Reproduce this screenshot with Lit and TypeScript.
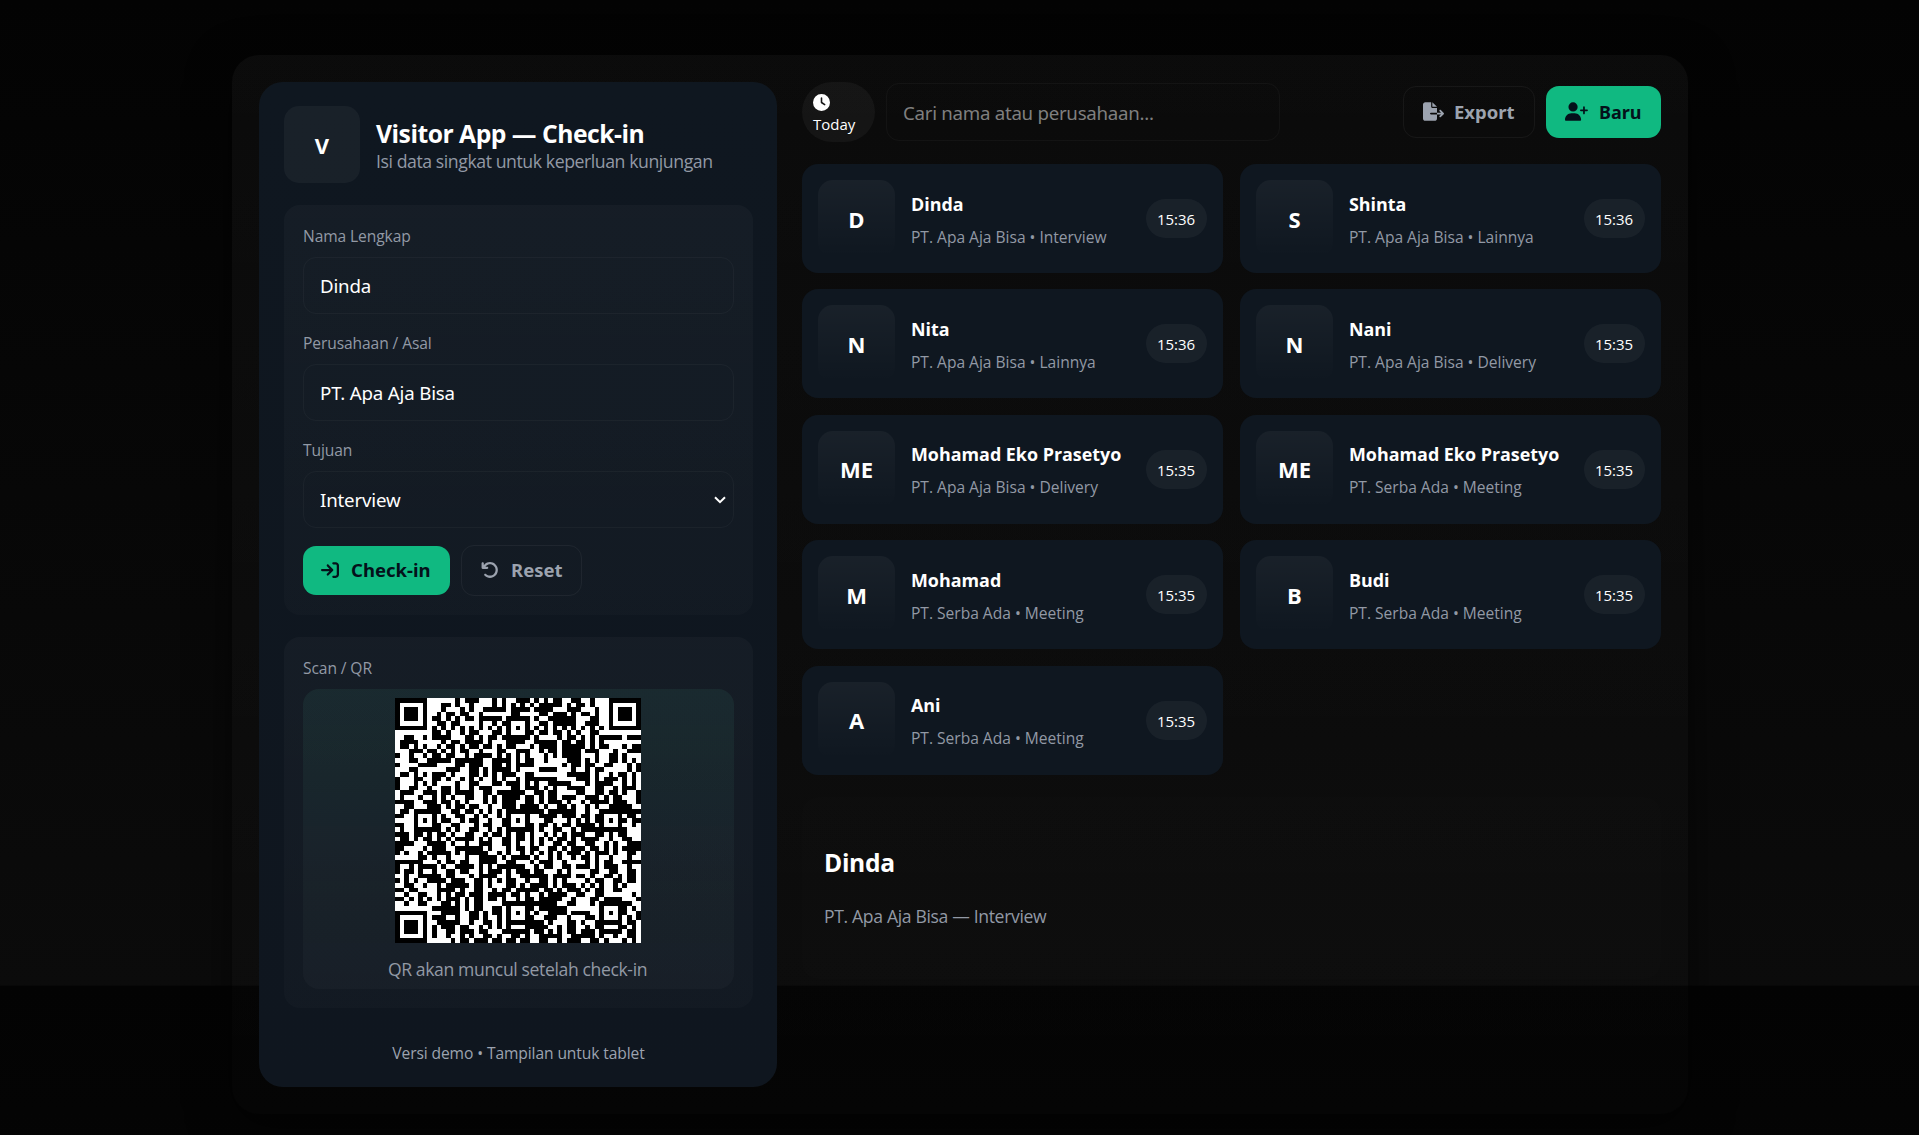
import { LitElement, html, svg, css } from "lit";
import { customElement, property, state } from "lit/decorators.js";

interface Visitor {
  name: string;
  company: string;
  purpose: string;
  time: string;
}

const VISITORS: Visitor[] = [
  { name: "Dinda", company: "PT. Apa Aja Bisa", purpose: "Interview", time: "15:36" },
  { name: "Shinta", company: "PT. Apa Aja Bisa", purpose: "Lainnya", time: "15:36" },
  { name: "Nita", company: "PT. Apa Aja Bisa", purpose: "Lainnya", time: "15:36" },
  { name: "Nani", company: "PT. Apa Aja Bisa", purpose: "Delivery", time: "15:35" },
  { name: "Mohamad Eko Prasetyo", company: "PT. Apa Aja Bisa", purpose: "Delivery", time: "15:35" },
  { name: "Mohamad Eko Prasetyo", company: "PT. Serba Ada", purpose: "Meeting", time: "15:35" },
  { name: "Mohamad", company: "PT. Serba Ada", purpose: "Meeting", time: "15:35" },
  { name: "Budi", company: "PT. Serba Ada", purpose: "Meeting", time: "15:35" },
  { name: "Ani", company: "PT. Serba Ada", purpose: "Meeting", time: "15:35" },
];

const initials = (name: string) =>
  name.split(" ").slice(0, 2).map((w) => w[0]).join("").toUpperCase();

const ICONS: Record<string, { w: number; d: string }> = {
  clock: {
    w: 512,
    d: "M256 0a256 256 0 1 1 0 512A256 256 0 1 1 256 0zM232 120l0 136c0 8 4 15.5 10.7 20l96 64c11 7.4 25.9 4.4 33.3-6.7s4.4-25.9-6.7-33.3L280 243.2 280 120c0-13.3-10.7-24-24-24s-24 10.7-24 24z",
  },
  enter: {
    w: 512,
    d: "M352 96l64 0c17.7 0 32 14.3 32 32l0 256c0 17.7-14.3 32-32 32l-64 0c-17.7 0-32 14.3-32 32s14.3 32 32 32l64 0c53 0 96-43 96-96l0-256c0-53-43-96-96-96l-64 0c-17.7 0-32 14.3-32 32s14.3 32 32 32zm-9.4 182.6c12.5-12.5 12.5-32.8 0-45.3l-128-128c-12.5-12.5-32.8-12.5-45.3 0s-12.5 32.8 0 45.3L242.7 224 32 224c-17.7 0-32 14.3-32 32s14.3 32 32 32l210.7 0-73.4 73.4c-12.5 12.5-12.5 32.8 0 45.3s32.8 12.5 45.3 0l128-128z",
  },
  undo: {
    w: 512,
    d: "M125.7 160l50.3 0c17.7 0 32 14.3 32 32s-14.3 32-32 32L48 224c-17.7 0-32-14.3-32-32L16 64c0-17.7 14.3-32 32-32s32 14.3 32 32l0 51.2L97.6 97.6c87.5-87.5 229.3-87.5 316.8 0s87.5 229.3 0 316.8s-229.3 87.5-316.8 0c-12.5-12.5-12.5-32.8 0-45.3s32.8-12.5 45.3 0c62.5 62.5 163.8 62.5 226.3 0s62.5-163.8 0-226.3s-163.8-62.5-226.3 0L125.7 160z",
  },
  exportFile: {
    w: 576,
    d: "M0 64C0 28.7 28.7 0 64 0L224 0l0 128c0 17.7 14.3 32 32 32l128 0 0 128-168 0c-13.3 0-24 10.7-24 24s10.7 24 24 24l168 0 0 112c0 35.3-28.7 64-64 64L64 512c-35.3 0-64-28.7-64-64L0 64zM384 336l0-48 110.1 0-39-39c-9.4-9.4-9.4-24.6 0-33.9s24.6-9.4 33.9 0l80 80c9.4 9.4 9.4 24.6 0 33.9l-80 80c-9.4 9.4-24.6 9.4-33.9 0s-9.4-24.6 0-33.9l39-39L384 336zm0-208l-128 0L256 0 384 128z",
  },
  userPlus: {
    w: 640,
    d: "M96 128a128 128 0 1 1 256 0A128 128 0 1 1 96 128zM0 482.3C0 383.8 79.8 304 178.3 304l91.4 0C368.2 304 448 383.8 448 482.3c0 16.4-13.3 29.7-29.7 29.7L29.7 512C13.3 512 0 498.7 0 482.3zM504 312l0-64-64 0c-13.3 0-24-10.7-24-24s10.7-24 24-24l64 0 0-64c0-13.3 10.7-24 24-24s24 10.7 24 24l0 64 64 0c13.3 0 24 10.7 24 24s-10.7 24-24 24l-64 0 0 64c0 13.3-10.7 24-24 24s-24-10.7-24-24z",
  },
};

const icon = (name: string) => {
  const { w, d } = ICONS[name];
  return html`<svg class="icon ${name}" viewBox="0 0 ${w} 512" aria-hidden="true"><path d=${d} /></svg>`;
};

/* QR modules of a version 9 symbol, one string per row; "#" is dark. */
const QR_ROWS = [
  "#######......#.###...#.#..###.#.#.##..##..#...#######",
  "#.....#...##.#..#....#.#.#.#.#.#####.#.##.#..#.#.....#",
  "#.###.#...#...#.#..#####.####.####...###...#..#.###.#",
  "#.###.#..#.##.##..#......##....##.###.#.##.#..#.###.#",
  "#.###.#.##.#.#.##.#####.#####.#..######...##..#.###.#",
  "#.....#..##.##....#..#.##...#..##.#####..###..#.....#",
  "#######.#.#.#.#.#.#.#.#.#.#.#.#.#.#.#.#.#.#.#.#######",
  "........##.#..#.##...##.#...##.##.##.#.#..##.........",
  "..##..#.####...##.#.##.######.#....#.##.#.#.#####.###",
  ".####.#...#.##.####.#...####..#####.##.##.#.#........",
  ".##.#....#.##.#.##.##.#.##...#.####.#####.#.##...#.##",
  "...###.##.#.#.##..#...##..###..#.##.####.###...#..###",
  "#..#....##.##..#.####.#.#.#.#...#.#.####...#..##.#...",
  "...##.######.######..####.#.##..#....###.#.#..##.#.#.",
  "#....#.##....##.###..##.#.####......#.##.##..##...#.#",
  "...##......###..##.#.####.#....####...#..#.##.....#.#",
  ".##.#.#.###.#...##.#.#.###..##.......#####.#..#.##.#.",
  "#...###.##.#..#.#.#..#.#..#.#######....###.#.###.#.#.",
  "#...#.#.#....#..##...##.###.#.#..#####...#.####..#.#.",
  "#..##..#..##.#..#.###....##.###.#.#..####..##..#.###.",
  ".###..###.##.####..##.######..##.##....##..##.##.#..#",
  ".#...#..#.#.#..##..#.#.####.##.#.##.###..###.#.##...#",
  "####..###.##.#.#...#.#.###..##.#.###.#..#.####.###..#",
  "..##...###.#.##.##..#..###.####.#..##.#..#.#..#####..",
  ".##.######..##.##.#.#.#.########.######..#..#########",
  "##..#...#.#..##..#.#..#.#...#..####.###.##.##...#.##.",
  "....#.#.#.##..#.##..#..##.#.#...##...#.#.#.##.#.##.##",
  "##..#...##..##...#.##..##...##.##.#.##.####.#...#..#.",
  ".#..######.#.#..##..#.#.######.#..##..#.####.#####...",
  "###.##.#.##.#..##..#.##.#.##.#..#.#.#.###..##.#.##...",
  ".##.#.##.#.#.####.#.#..##.##.#.#.#.##.#.####..#..##..",
  "####..#####.#..#..###..##.#..#.#..##.##..##..#.#..###",
  "##....#.###..######.#...#.##.##..##.#.###.##.#.#.####",
  "#.#..#######.#.#####..#.#..#.#.#.#.#.###.#.###.#..##.",
  ".....#..#..#...#..####.#.####.#..#.#..#.##.#..#...#..",
  "#######..#.##.##..####..##...#.###..#....#.#.##..####",
  "#..#.#.##.#..####.#.#.######..#.##..##.###.#.###..#..",
  "#.##.##.#..##.##..#.###.#.###.##...#.#....##..##..##.",
  "..#..#####.##...#.####..#..######.####.##.#..##.#.##.",
  "#.#.#.#####.###..##.#.#.##..#..##.#.#....#.##..##.##.",
  "..##..#..#.#####.##.#...##.#.####.#.###.#.#.#..#.#...",
  "##.##....####.#..##..#.##.#####.##.#.###.#.##..##....",
  "..#..##..#.#.##.###.####.##.#..#.####..##..##......#.",
  "##.#.###.#.###.#.##.##.#..#.##.#####..#...##.####...#",
  "..#..##...##.#.#.##....##.#..######..##...#.#.##.##..",
  "........######.#.##..##.####.#.######.......#.####.#.",
  "#######...####..##.#.##.#####.#..####.####..######..#",
  "#.....#.###..#..##.#..#.#...##..###..#...##.#...#.#.#",
  "#.###.#..#####..#..##.#.#.#.####.#...##.#..##.#.#.##.",
  "#.###.#.#.###.##..#.#.#.#...#####..#.##..#.##...##.#.",
  "#.###.#.#..##.###.##...######.##.#.#.##.###.#####.##.",
  "#.....#.#..#..#.#..##.#..##.#..#####..#####.#..#..##.",
  "#######.....#.##.###.##.##.##..##..#.###..##.#...#.#.",
].map((r) => r.slice(0, 53).split("").map((c) => c === "#"));

const QR_SIZE = 53;

/* Ring patterns: three 7×7 finders with a light border, and the 5×5 alignment marks. */
function stampPatterns(grid: boolean[][]) {
  const ring = (cx: number, cy: number, reach: number, dark: (r: number) => boolean) => {
    for (let y = -reach; y <= reach; y++)
      for (let x = -reach; x <= reach; x++) {
        const row = grid[cy + y];
        if (row && cx + x >= 0 && cx + x < QR_SIZE) row[cx + x] = dark(Math.max(Math.abs(x), Math.abs(y)));
      }
  };
  for (let i = 8; i < QR_SIZE - 8; i++) {
    grid[6][i] = i % 2 === 0;
    grid[i][6] = i % 2 === 0;
  }
  for (const [cx, cy] of [[3, 3], [49, 3], [3, 49]]) ring(cx, cy, 4, (r) => r < 2 || r === 3);
  for (const [cx, cy] of [[26, 6], [6, 26], [26, 26], [46, 26], [26, 46], [46, 46]]) ring(cx, cy, 2, (r) => r !== 1);
  return grid;
}

function lightPath(grid: boolean[][]) {
  let d = "";
  grid.forEach((row, y) => {
    for (let x = 0; x < QR_SIZE; x++) {
      if (row[x]) continue;
      let end = x;
      while (end < QR_SIZE && !row[end]) end++;
      d += `M${x} ${y}h${end - x}v1h${x - end}z`;
      x = end;
    }
  });
  return d;
}

const QR_PATH = lightPath(stampPatterns(QR_ROWS));

const shared = css`
  * { box-sizing: border-box; }
  .avatar {
    display: grid;
    place-items: center;
    width: 77px;
    height: 77px;
    flex: none;
    border-radius: 15px;
    font-weight: 700;
    font-size: 22px;
    line-height: 30px;
    color: #fff;
    background: linear-gradient(180deg, rgba(255, 255, 255, 0.045), rgba(255, 255, 255, 0));
  }
  .pill {
    border-radius: 30px;
    background: rgba(255, 255, 255, 0.045);
    color: #fff;
    font-size: 15px;
  }
`;

@customElement("visitor-card")
export class VisitorCard extends LitElement {
  @property({ attribute: false }) visitor!: Visitor;

  static styles = [
    shared,
    css`
      :host {
        display: flex;
        align-items: center;
        gap: 16px;
        height: 109px;
        padding: 0 16px;
        box-sizing: border-box;
        border-radius: 16px;
        background: #0f1720;
      }
      .info { flex: 1; min-width: 0; white-space: nowrap; }
      .name { font-weight: 700; font-size: 17.9px; line-height: 28px; color: #fff; margin-top: 2px; }
      .meta { font-size: 15.6px; line-height: 26px; letter-spacing: -0.02px; color: #9299a5; margin-top: 6px; }
      .pill {
        display: grid;
        place-items: center;
        width: 61px;
        height: 39px;
        padding: 1px 1px 0 0;
      }
    `,
  ];

  render() {
    const v = this.visitor;
    return html`
      <div class="avatar">${initials(v.name)}</div>
      <div class="info">
        <div class="name">${v.name}</div>
        <div class="meta">${v.company} • ${v.purpose}</div>
      </div>
      <div class="pill">${v.time}</div>
    `;
  }
}

@customElement("app-root")
export class AppRoot extends LitElement {
  @state() private selected = VISITORS[0];

  static styles = [
    shared,
    css`
      :host {
        display: block;
        box-sizing: border-box;
        height: 1135px;
        padding: 55px 231px 21px 232px;
        overflow: hidden;
        font-family: "Open Sans", "Noto Sans", sans-serif;
        color: #fff;
        background: linear-gradient(180deg, #030303 0%, #0b0b0b 100%) 0 0 / 100% 985.6px repeat;
      }
      .shell {
        display: grid;
        grid-template-columns: 518px 859px;
        gap: 25px;
        height: 1059px;
        padding: 27px;
        border-radius: 27px;
        background: linear-gradient(180deg, rgba(255, 255, 255, 0.03), rgba(255, 255, 255, 0.005));
        box-shadow: 0 11px 44px rgba(0, 0, 0, 0.6);
      }
      .side {
        display: flex;
        flex-direction: column;
        gap: 22px;
        padding: 24px 24px 0 25px;
        border-radius: 24px;
        background: linear-gradient(180deg, #0f1720, #0f161f);
      }
      .brand { display: flex; align-items: center; gap: 16px; height: 77px; }
      .brand .avatar { width: 76px; background: rgba(255, 255, 255, 0.042); }
      .brand-text { padding-top: 6px; white-space: nowrap; }
      .title { font-weight: 700; font-size: 24.7px; line-height: 28px; letter-spacing: -0.49px; }
      .subtitle { font-size: 17.7px; line-height: 27px; letter-spacing: -0.44px; color: #9299a5; }
      .panel {
        padding: 19px;
        border-radius: 16px;
        background: linear-gradient(180deg, rgba(255, 255, 255, 0.026), rgba(255, 255, 255, 0.014));
      }
      .form { display: flex; flex-direction: column; gap: 17px; }
      .label { font-size: 15.6px; line-height: 23px; letter-spacing: -0.1px; color: #9299a5; padding-top: 1px; margin-bottom: 9px; }
      .control {
        display: flex;
        align-items: center;
        justify-content: space-between;
        height: 57px;
        padding: 0 7px 0 16px;
        border: 1px solid rgba(255, 255, 255, 0.035);
        border-radius: 13px;
        font-family: "Noto Sans", "Open Sans", sans-serif;
        font-size: 18.7px;
        letter-spacing: -0.18px;
        white-space: nowrap;
      }
      .chevron { width: 12px; height: 8px; fill: none; stroke: #fff; stroke-width: 2; }
      .actions { display: flex; align-items: center; gap: 11px; height: 51px; }
      .btn {
        display: flex;
        align-items: center;
        height: 51px;
        padding: 0 18px 1px;
        border: 1px solid rgba(255, 255, 255, 0.05);
        border-radius: 13px;
        background: transparent;
        font: 700 18.5px/26px "Noto Sans", "Open Sans", sans-serif;
        color: #9ca3af;
        white-space: nowrap;
      }
      .btn.primary { border: 0; background: #10b981; color: #04111a; }
      .icon { display: block; flex: none; height: 18px; fill: currentColor; }
      .btn.checkin { width: 147px; height: 49px; }
      .btn.reset { width: 121px; }
      .enter { width: 18px; margin-right: 12px; }
      .undo { width: 18px; margin: 0 12px 0 1px; }
      .qr {
        display: flex;
        flex-direction: column;
        align-items: center;
        height: 300px;
        padding: 9px 2px 0 0;
        border-radius: 16px;
        background: linear-gradient(180deg, rgba(16, 185, 129, 0.06), rgba(16, 185, 129, 0.015) 60%, rgba(16, 185, 129, 0)),
          rgba(255, 255, 255, 0.022);
      }
      .code { display: block; width: 246px; height: 245px; background: #000; }
      .code path { fill: #fff; }
      .caption { margin-top: 13px; font-size: 17.6px; line-height: 26px; letter-spacing: -0.38px; color: #9299a5; }
      .foot { margin-top: 10px; text-align: center; font-size: 15.6px; line-height: 26px; letter-spacing: -0.1px; color: #9ca3af; }
      .main { display: flex; flex-direction: column; gap: 22px; }
      .toolbar { display: flex; align-items: center; gap: 11px; height: 60px; }
      .today { width: 73px; height: 60px; padding: 12px 0 0 11px; line-height: 22px; }
      .clock { width: 17px; height: 17px; margin-bottom: 2px; }
      .search { width: 394px; height: 58px; color: #7f7f7f; letter-spacing: -0.28px; }
      .spacer { flex: 1; }
      .btn.export { width: 132px; height: 52px; padding-left: 19px; }
      .btn.new { width: 115px; height: 52px; padding-left: 19px; font-size: 18px; }
      .exportFile { width: 21px; height: 19px; margin-right: 10px; }
      .userPlus { width: 23px; height: 19px; margin-right: 11px; }
      .grid { display: grid; grid-template-columns: 421px 421px; column-gap: 17px; row-gap: 16.4px; }
      .detail {
        height: 182px;
        padding: 46px 22px 0;
        border-radius: 16px;
        background: rgba(255, 255, 255, 0.008);
      }
      .detail-name { font-weight: 700; font-size: 24.6px; line-height: 40px; letter-spacing: -0.3px; }
      .detail-meta { margin-top: 20px; font-size: 17.6px; line-height: 26px; letter-spacing: -0.35px; color: #9299a5; }
    `,
  ];

  render() {
    const v = this.selected;
    return html`
      <div class="shell">
        <aside class="side">
          <header class="brand">
            <div class="avatar">V</div>
            <div class="brand-text">
              <div class="title">Visitor App — Check-in</div>
              <div class="subtitle">Isi data singkat untuk keperluan kunjungan</div>
            </div>
          </header>
          <section class="panel form">
            <div>
              <div class="label">Nama Lengkap</div>
              <div class="control">${v.name}</div>
            </div>
            <div>
              <div class="label">Perusahaan / Asal</div>
              <div class="control">${v.company}</div>
            </div>
            <div>
              <div class="label">Tujuan</div>
              <div class="control">
                ${v.purpose}
                <svg class="chevron" viewBox="0 0 12 8"><path d="M1 1.2l5 5 5-5" /></svg>
              </div>
            </div>
            <div class="actions">
              <button class="btn primary checkin">${icon("enter")}Check-in</button>
              <button class="btn reset">${icon("undo")}Reset</button>
            </div>
          </section>
          <section class="panel">
            <div class="label">Scan / QR</div>
            <div class="qr">
              <svg class="code" viewBox="0 0 53 53" preserveAspectRatio="none" shape-rendering="crispEdges">
                ${svg`<path d=${QR_PATH} />`}
              </svg>
              <div class="caption">QR akan muncul setelah check-in</div>
            </div>
          </section>
          <div class="foot">Versi demo • Tampilan untuk tablet</div>
        </aside>
        <main class="main">
          <div class="toolbar">
            <div class="pill today">${icon("clock")}Today</div>
            <div class="control search">Cari nama atau perusahaan...</div>
            <div class="spacer"></div>
            <button class="btn export">${icon("exportFile")}Export</button>
            <button class="btn primary new">${icon("userPlus")}Baru</button>
          </div>
          <div class="grid">${VISITORS.map((item) => html`<visitor-card .visitor=${item}></visitor-card>`)}</div>
          <section class="detail">
            <div class="detail-name">${v.name}</div>
            <div class="detail-meta">${v.company} — ${v.purpose}</div>
          </section>
        </main>
      </div>
    `;
  }
}
